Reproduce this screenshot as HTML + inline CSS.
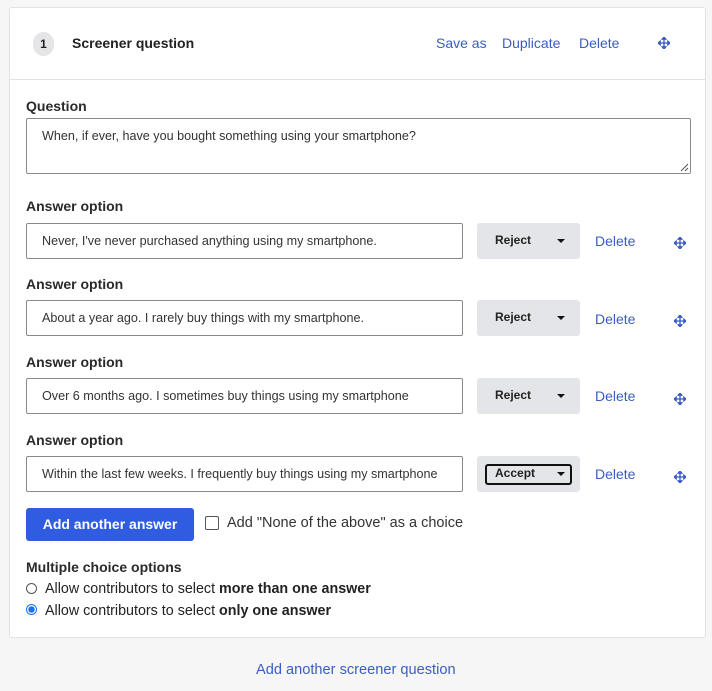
<!DOCTYPE html><html><head><style>
body{margin:0;background:#f6f6f7;font-family:"Liberation Sans",sans-serif;color:#222;width:712px;height:691px;position:relative;overflow:hidden}
.card{position:absolute;left:9px;top:7px;width:697px;height:631px;background:#fff;border:1px solid #e2e2e4;border-radius:3px;box-sizing:border-box}
.hdr{position:absolute;left:0;top:0;right:0;height:71px;border-bottom:1px solid #e2e2e4}
.a{position:absolute;font-size:14px}
.lnk{color:#3b5cc4}
.lbl{position:absolute;left:16px;font-size:14px;font-weight:bold;color:#2a2a2a}
.inp{position:absolute;left:16px;width:437px;height:36px;border:1px solid #8a8a8a;border-radius:2px;box-sizing:border-box;font-size:12.6px;padding:10px 15px;white-space:nowrap;overflow:hidden;color:#333}
.sel{position:absolute;left:467px;width:103px;height:36px;background:#e4e5e8;border-radius:3px;font-size:12px;font-weight:bold}
.sel span{position:absolute;left:18px;top:10px}
.tri{position:absolute;left:80px;top:16px;width:0;height:0;border-left:4px solid transparent;border-right:4px solid transparent;border-top:4px solid #111}
.mv{position:absolute;width:12px;height:12px}
</style></head><body>
<div class="card">
<div class="hdr">
<div style="position:absolute;left:23px;top:24px;width:21px;height:24px;border-radius:11px;background:#e5e5e7;font-size:12px;font-weight:bold;text-align:center;line-height:24px">1</div>
<div class="a" style="left:62px;top:27px;font-weight:bold;color:#222">Screener question</div>
<div class="a lnk" style="left:426px;top:27px">Save as</div>
<div class="a lnk" style="left:492px;top:27px">Duplicate</div>
<div class="a lnk" style="left:569px;top:27px">Delete</div>
<svg class="mv" style="left:648px;top:29px" viewBox="0 0 14 14"><path d="M7 1V13M1 7H13M7 0L5 2.5H9ZM7 14L5 11.5H9ZM0 7L2.5 5V9ZM14 7L11.5 5V9Z" stroke="#3b5cc4" stroke-width="1.6" fill="#3b5cc4"/></svg>
</div>
<div class="lbl" style="top:90px">Question</div>
<div class="inp" style="top:110px;width:665px;height:56px">When, if ever, have you bought something using your smartphone?</div>
<svg style="position:absolute;left:670px;top:155px" width="9" height="9"><path d="M1 8L8 1M5 8L8 5" stroke="#555"/></svg>

<div class="lbl" style="top:190px">Answer option</div>
<div class="inp" style="top:215px">Never, I've never purchased anything using my smartphone.</div>
<div class="sel" style="top:215px"><span>Reject</span><i class="tri"></i></div>
<div class="a lnk" style="left:585px;top:225px">Delete</div>
<svg class="mv" style="left:664px;top:229px" viewBox="0 0 14 14"><path d="M7 1V13M1 7H13M7 0L5 2.5H9ZM7 14L5 11.5H9ZM0 7L2.5 5V9ZM14 7L11.5 5V9Z" stroke="#3b5cc4" stroke-width="1.6" fill="#3b5cc4"/></svg>

<div class="lbl" style="top:268px">Answer option</div>
<div class="inp" style="top:292px">About a year ago. I rarely buy things with my smartphone.</div>
<div class="sel" style="top:292px"><span>Reject</span><i class="tri"></i></div>
<div class="a lnk" style="left:585px;top:303px">Delete</div>
<svg class="mv" style="left:664px;top:307px" viewBox="0 0 14 14"><path d="M7 1V13M1 7H13M7 0L5 2.5H9ZM7 14L5 11.5H9ZM0 7L2.5 5V9ZM14 7L11.5 5V9Z" stroke="#3b5cc4" stroke-width="1.6" fill="#3b5cc4"/></svg>

<div class="lbl" style="top:346px">Answer option</div>
<div class="inp" style="top:370px">Over 6 months ago. I sometimes buy things using my smartphone</div>
<div class="sel" style="top:370px"><span>Reject</span><i class="tri"></i></div>
<div class="a lnk" style="left:585px;top:380px">Delete</div>
<svg class="mv" style="left:664px;top:385px" viewBox="0 0 14 14"><path d="M7 1V13M1 7H13M7 0L5 2.5H9ZM7 14L5 11.5H9ZM0 7L2.5 5V9ZM14 7L11.5 5V9Z" stroke="#3b5cc4" stroke-width="1.6" fill="#3b5cc4"/></svg>

<div class="lbl" style="top:424px">Answer option</div>
<div class="inp" style="top:448px">Within the last few weeks. I frequently buy things using my smartphone</div>
<div class="sel" style="top:448px"><div style="position:absolute;left:8px;top:8px;width:87px;height:21px;border:2px solid #111;border-radius:3px;box-sizing:border-box"></div><span style="left:18px;top:10px">Accept</span><i class="tri"></i></div>
<div class="a lnk" style="left:585px;top:458px">Delete</div>
<svg class="mv" style="left:664px;top:463px" viewBox="0 0 14 14"><path d="M7 1V13M1 7H13M7 0L5 2.5H9ZM7 14L5 11.5H9ZM0 7L2.5 5V9ZM14 7L11.5 5V9Z" stroke="#3b5cc4" stroke-width="1.6" fill="#3b5cc4"/></svg>

<div style="position:absolute;left:16px;top:500px;width:168px;height:33px;background:#2f5ce0;border-radius:3px;color:#fff;font-size:14px;font-weight:bold;text-align:center;line-height:33px">Add another answer</div>
<div style="position:absolute;left:195px;top:508px;width:12px;height:12px;border:1px solid #555;border-radius:2px"></div>
<div class="a" style="left:217px;top:507px;color:#333;font-size:14.5px">Add "None of the above" as a choice</div>

<div class="lbl" style="top:551px">Multiple choice options</div>
<div style="position:absolute;left:16px;top:575px;width:9px;height:9px;border:1px solid #555;border-radius:50%"></div>
<div class="a" style="left:35px;top:573px;font-size:14.3px">Allow contributors to select <b>more than one answer</b></div>
<div style="position:absolute;left:16px;top:596px;width:9px;height:9px;border:1px solid #1a73e8;border-radius:50%;background:radial-gradient(#1a73e8 45%,#fff 55%)"></div>
<div class="a" style="left:35px;top:595px;font-size:14.3px">Allow contributors to select <b>only one answer</b></div>
</div>
<div class="a lnk" style="left:256px;top:662px;font-size:14.6px">Add another screener question</div>
</body></html>
